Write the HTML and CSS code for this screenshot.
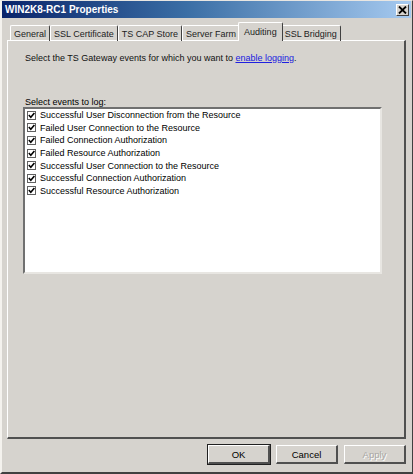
FILE: index.html
```html
<!DOCTYPE html>
<html lang="en">
<head>
    <meta charset="UTF-8">
    <title>WIN2K8-RC1 Properties</title>
    <link rel="stylesheet" href="styles.css">
</head>
<body>
    <div class="window">
        <!-- 标题栏 -->
        <div class="titlebar">
            <span class="title">WIN2K8-RC1 Properties</span>
            <button class="close-btn" aria-label="Close">
                <svg width="9" height="8" viewBox="0 0 9 8"><path d="M1 0.5 L8 7.5 M8 0.5 L1 7.5" stroke="#000" stroke-width="1.8"/></svg>
            </button>
        </div>

        <div class="content">
            <!-- 选项卡 -->
            <div class="tabs">
                <div class="tab">General</div>
                <div class="tab">SSL Certificate</div>
                <div class="tab">TS CAP Store</div>
                <div class="tab">Server Farm</div>
                <div class="tab active">Auditing</div>
                <div class="tab">SSL Bridging</div>
            </div>

            <div class="panel">
                <p class="intro">Select the TS Gateway events for which you want to <a href="#">enable logging</a>.</p>
                <p class="list-label">Select events to log:</p>
                <div class="listbox">
                    <label class="item"><span class="check"></span>Successful User Disconnection from the Resource</label>
                    <label class="item"><span class="check"></span>Failed User Connection to the Resource</label>
                    <label class="item"><span class="check"></span>Failed Connection Authorization</label>
                    <label class="item"><span class="check"></span>Failed Resource Authorization</label>
                    <label class="item"><span class="check"></span>Successful User Connection to the Resource</label>
                    <label class="item"><span class="check"></span>Successful Connection Authorization</label>
                    <label class="item"><span class="check"></span>Successful Resource Authorization</label>
                </div>
            </div>

            <!-- 底部按钮 -->
            <div class="buttons">
                <button class="btn default">OK</button>
                <button class="btn">Cancel</button>
                <button class="btn disabled">Apply</button>
            </div>
        </div>
    </div>
</body>
</html>
```

FILE: styles.css
```css
/* 基础样式 */
* {
    margin: 0;
    padding: 0;
    box-sizing: border-box;
}

html, body {
    background-color: #d6d3ce;
    font-family: 'Liberation Sans', Arial, sans-serif;
    font-size: 9px;
    line-height: 10px;
    color: #000;
    overflow: hidden;
}

/* 窗口 */
.window {
    width: 413px;
    height: 474px;
    background: #d6d3ce;
    border-top: 1px solid #e8e6e2;
    border-left: 2px solid #f4f2ee;
    border-right: 1px solid #404040;
    border-bottom: 2px solid #404040;
    display: flex;
    flex-direction: column;
}

/* 标题栏 */
.titlebar {
    height: 17px;
    margin: 0 1px 0 0;
    background: linear-gradient(to right, #0a246a 0%, #3a6ea5 45%, #a6caf0 100%);
    display: flex;
    align-items: center;
    justify-content: space-between;
    padding: 0 2px 0 3px;
}

.title {
    color: #fff;
    font-family: 'Liberation Sans', Arial, sans-serif;
    font-weight: bold;
    font-size: 10px;
}

.close-btn {
    width: 13px;
    height: 12px;
    background: #d6d3ce;
    border-top: 1px solid #fff;
    border-left: 1px solid #fff;
    border-right: 1px solid #404040;
    border-bottom: 1px solid #404040;
    display: flex;
    align-items: center;
    justify-content: center;
}

.content {
    flex: 1;
    display: flex;
    flex-direction: column;
    padding: 4px 6px 0 5px;
}

/* 选项卡样式 */
.tabs {
    display: flex;
    align-items: flex-end;
    padding-left: 3px;
    height: 19px;
    position: relative;
    z-index: 1;
    margin-bottom: -1px;
}

.tab {
    height: 16px;
    padding: 3px 3px 0 3px;
    border-top: 1px solid #fff;
    border-left: 1px solid #fff;
    border-right: 1px solid #404040;
    border-radius: 2px 2px 0 0;
    white-space: nowrap;
    color: #222;
}

.tab.active {
    height: 19px;
    margin: 0 -2px;
    padding: 4px 5px 0 5px;
    background: #d6d3ce;
    position: relative;
    z-index: 2;
}

.panel {
    height: 399px;
    border-top: 1px solid #fff;
    border-left: 1px solid #fff;
    border-right: 2px solid #505050;
    border-bottom: 2px solid #505050;
    padding: 12px 22px 0 15px;
}

.intro {
    color: #111;
    padding-left: 2px;
}

.intro a {
    color: #2020e0;
    text-decoration: underline;
}

.list-label {
    margin-top: 34px;
    padding-left: 2px;
}

/* 列表框 */
.listbox {
    height: 167px;
    background: #fff;
    border-top: 2px solid #707070;
    border-left: 2px solid #707070;
    border-right: 2px solid #e8e6e2;
    border-bottom: 2px solid #e8e6e2;
    padding: 0 0 0 2px;
    display: flex;
    flex-direction: column;
}

.item {
    height: 12.6px;
    display: flex;
    align-items: center;
    gap: 4px;
    white-space: nowrap;
}

.check {
    width: 9px;
    height: 9px;
    border: 1px solid #606060;
    background: #fff url("data:image/svg+xml,%3Csvg xmlns='http://www.w3.org/2000/svg' width='7' height='7' viewBox='0 0 7 7'%3E%3Cpath d='M0.8 3 L2.8 5.2 L6.4 1' fill='none' stroke='%23000' stroke-width='1.6'/%3E%3C/svg%3E") center / 7px 7px no-repeat;
    flex-shrink: 0;
}

/* 按钮 */
.buttons {
    display: flex;
    justify-content: flex-end;
    gap: 6px;
    padding: 6px 0 0 0;
}

.btn {
    width: 62px;
    height: 19px;
    background: #d6d3ce;
    font-family: 'Liberation Sans', Arial, sans-serif;
    font-size: 9.5px;
    color: #000;
    border-top: 1px solid #fff;
    border-left: 1px solid #fff;
    border-right: 2px solid #505050;
    border-bottom: 2px solid #505050;
}

.btn.default {
    outline: 1px solid #202020;
    outline-offset: 0;
}

.btn.disabled {
    color: #a8a6a2;
    text-shadow: 1px 1px 0 #fff;
}
```
